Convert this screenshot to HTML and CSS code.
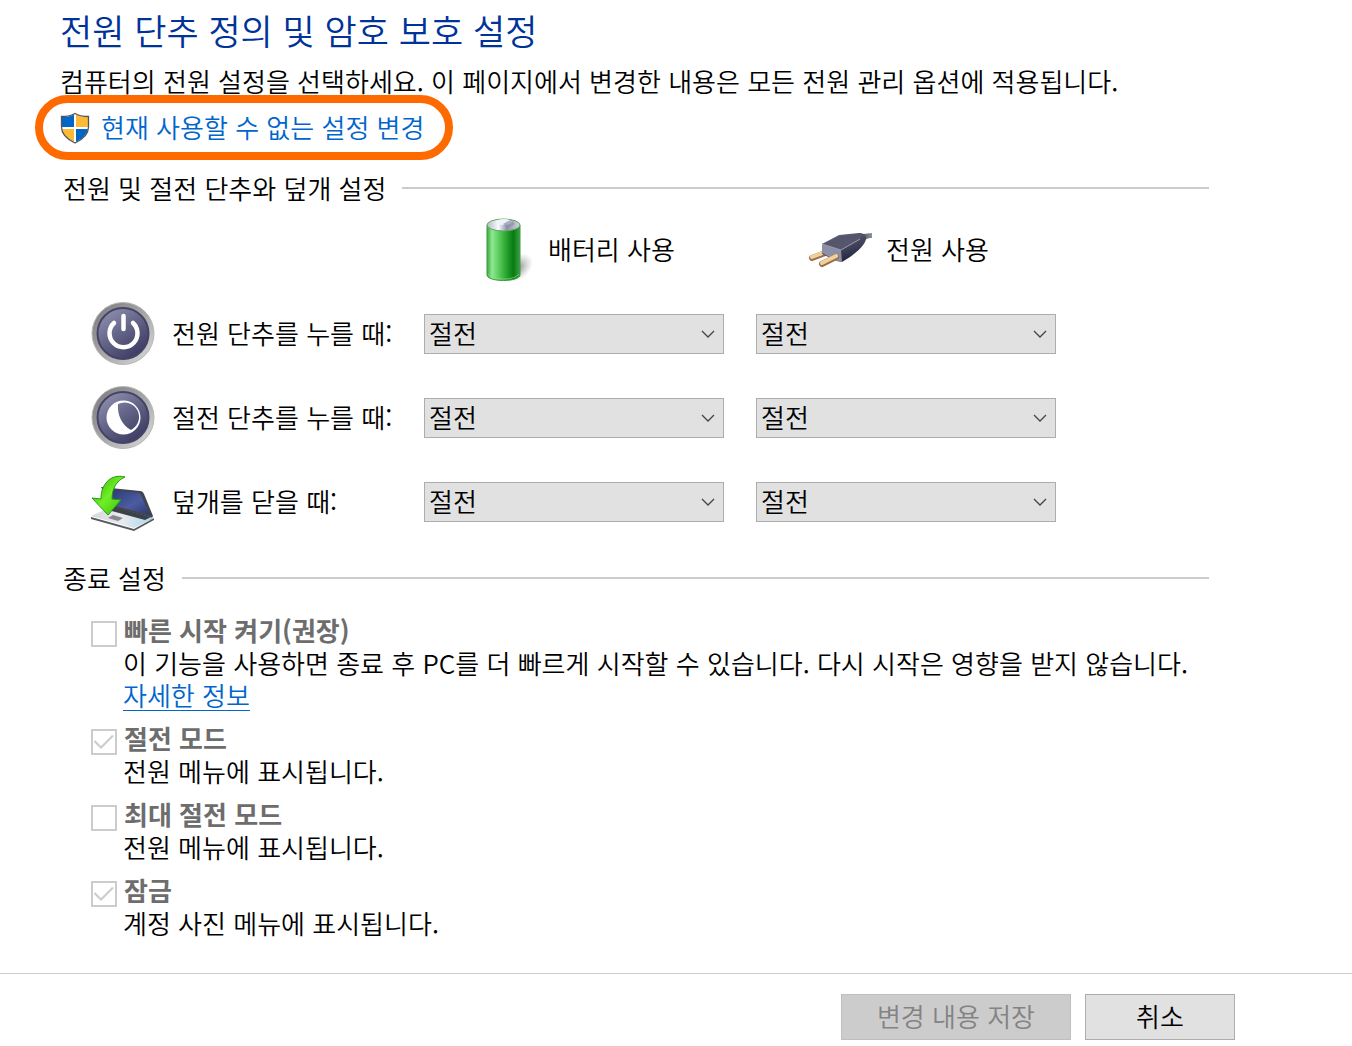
FILE: index.html
```html
<!DOCTYPE html>
<html lang="ko">
<head>
<meta charset="utf-8">
<meta name="viewport" content="width=device-width, initial-scale=1">
<title>전원 단추 정의 및 암호 보호 설정</title>
<link rel="stylesheet" href="styles.css">
</head>
<body>
<form class="page">
  <main class="content">
    <h1 class="title">전원 단추 정의 및 암호 보호 설정</h1>
    <p class="intro">컴퓨터의 전원 설정을 선택하세요. 이 페이지에서 변경한 내용은 모든 전원 관리 옵션에 적용됩니다.</p>
    <a class="admin-link" href="#">
      <svg class="shield" viewBox="0 0 30 32" aria-hidden="true">
        <defs><clipPath id="shieldClip"><path d="M15 2C11 4.500 6 5 2 5v10c0 7 6 12 13 15.500C22 27 28 22 28 15V5C24 5 19 4.500 15 2z"/></clipPath></defs>
        <g clip-path="url(#shieldClip)">
          <path fill="#0067c8" d="M0 0h14v16H0zM16 17h14v15H16z"/>
          <path fill="#fdbb35" d="M16 0h14v16H16zM0 17h14v15H0z"/>
          <path fill="#fff" d="M14 0h2v32h-2zM0 15h30v2H0z"/>
        </g>
        <path fill="none" stroke="#50565c" stroke-width="1.300" d="M15 1.500C11 4 6 4.500 1.500 4.500V15c0 7 6 12.500 13.500 16C22.500 27.500 28.500 22 28.500 15V4.500C24 4.500 19 4 15 1.500z"/>
      </svg>
      <span>현재 사용할 수 없는 설정 변경</span>
    </a>

    <section class="buttons-section">
      <h2 class="section-title">전원 및 절전 단추와 덮개 설정</h2>
      <div class="grid">
        <div class="source source-battery">
          <svg class="icon" viewBox="0 0 64 64" aria-hidden="true">
            <defs>
              <linearGradient id="cell"><stop offset="0" stop-color="#35a83b"/><stop offset=".15" stop-color="#8fe88f"/><stop offset=".38" stop-color="#55c957"/><stop offset=".62" stop-color="#239d2b"/><stop offset=".8" stop-color="#087a12"/><stop offset="1" stop-color="#3da044"/></linearGradient>
              <linearGradient id="cap"><stop offset="0" stop-color="#b9bbc4"/><stop offset=".35" stop-color="#f8f8ff"/><stop offset=".6" stop-color="#8f91a8"/><stop offset="1" stop-color="#d5d5df"/></linearGradient>
              <radialGradient id="shade"><stop offset="0" stop-color="#666" stop-opacity=".8"/><stop offset="1" stop-color="#999" stop-opacity="0"/></radialGradient>
            </defs>
            <ellipse cx="47" cy="50" rx="18" ry="12" fill="url(#shade)" transform="rotate(-38 47 50)"/>
            <path fill="url(#cell)" stroke="#3c9b40" d="M17 7v50c0 3 7 5.500 16.500 5.500S50 60 50 57V7z"/>
            <path fill="none" stroke="#96df96" stroke-opacity=".6" d="M18 56c2 3 8 5 15.500 5S47 59 49 56"/>
            <ellipse cx="33.500" cy="7" rx="16.500" ry="6" fill="url(#cap)" stroke="#5fa762"/>
            <ellipse cx="34" cy="4" rx="8" ry="3" fill="#f2f2fa"/>
            <path fill="#8e8fac" d="m33 6 7-4 5 4-7 4z" opacity=".7"/>
          </svg>
          <span>배터리 사용</span>
        </div>
        <div class="source source-plug">
          <svg class="icon" viewBox="0 0 64 64" aria-hidden="true">
            <defs>
              <linearGradient id="plug" x2=".5" y2="1"><stop offset="0" stop-color="#73748a"/><stop offset=".5" stop-color="#4a4b63"/><stop offset="1" stop-color="#23243f"/></linearGradient>
              <linearGradient id="cord"><stop offset="0" stop-color="#454b4c"/><stop offset="1" stop-color="#8b9292"/></linearGradient>
            </defs>
            <path fill="url(#cord)" d="M51 15c5 2 8 0 13 0v5c-4 0-7 1-10 5z"/>
            <path fill="none" stroke="#95714a" stroke-width="6" stroke-linecap="round" d="m4 40 16-6"/>
            <path fill="none" stroke="#f3cf9d" stroke-width="4" stroke-linecap="round" d="m4 39 16-6"/>
            <path fill="url(#plug)" d="M14 26 31 17l20-2c5 0 8 3 7 6-1 6-9 13-16 18l-8 5-5-1-15-7z"/>
            <path fill="#55566b" d="m15 26 17-8 19-2c4 1 3 3 0 5L33 32z"/>
            <path fill="#8d8fa5" d="m14 26 19 6 1 12-5-1-15-8z"/>
            <path fill="none" stroke="#9b9cb0" stroke-width="1" d="m14 26 19 6 19-11"/>
            <path fill="none" stroke="#95714a" stroke-width="6" stroke-linecap="round" d="m14 46 14-7"/>
            <path fill="none" stroke="#f3cf9d" stroke-width="4" stroke-linecap="round" d="m14 45 14-7"/>
          </svg>
          <span>전원 사용</span>
        </div>

        <div class="action">
          <svg class="icon" viewBox="0 0 64 64" aria-hidden="true">
            <defs>
              <linearGradient id="ring" x2="1" y2="1"><stop offset="0" stop-color="#77777b"/><stop offset=".55" stop-color="#aaaaac"/><stop offset="1" stop-color="#dedede"/></linearGradient>
              <linearGradient id="face" x2=".7" y2="1"><stop offset="0" stop-color="#9a9ab8"/><stop offset=".5" stop-color="#66678a"/><stop offset="1" stop-color="#3d3b62"/></linearGradient>
            </defs>
            <circle cx="32" cy="31.500" r="31" fill="url(#ring)" stroke="#b7b7b7"/>
            <circle cx="32" cy="31.500" r="25.500" fill="url(#face)" stroke="#454366" stroke-width="2"/>
            <path fill="none" stroke="#fff" stroke-width="4.500" stroke-linecap="round" d="M23 21a14 14 0 1 0 19 0M32.500 14v13"/>
          </svg>
          <span>전원 단추를 누를 때:</span>
        </div>
        <div class="picker">
          <select class="select" aria-label="전원 단추를 누를 때: 배터리 사용"><option>절전</option></select>
          <svg class="chevron" viewBox="0 0 14 8" aria-hidden="true"><path d="m1 1 6 6 6-6"/></svg>
        </div>
        <div class="picker">
          <select class="select" aria-label="전원 단추를 누를 때: 전원 사용"><option>절전</option></select>
          <svg class="chevron" viewBox="0 0 14 8" aria-hidden="true"><path d="m1 1 6 6 6-6"/></svg>
        </div>

        <div class="action">
          <svg class="icon" viewBox="0 0 64 64" aria-hidden="true">
            <circle cx="32" cy="31.500" r="31" fill="url(#ring)" stroke="#b7b7b7"/>
            <circle cx="32" cy="31.500" r="25.500" fill="url(#face)" stroke="#454366" stroke-width="2"/>
            <path fill="#fff" fill-rule="evenodd" d="M32.500 14.500a17 17 0 1 0 0 34 17 17 0 0 0 0-34zM27 18a14.500 14.500 0 0 1 13 26C31 39 26 29 27 18z"/>
          </svg>
          <span>절전 단추를 누를 때:</span>
        </div>
        <div class="picker">
          <select class="select" aria-label="절전 단추를 누를 때: 배터리 사용"><option>절전</option></select>
          <svg class="chevron" viewBox="0 0 14 8" aria-hidden="true"><path d="m1 1 6 6 6-6"/></svg>
        </div>
        <div class="picker">
          <select class="select" aria-label="절전 단추를 누를 때: 전원 사용"><option>절전</option></select>
          <svg class="chevron" viewBox="0 0 14 8" aria-hidden="true"><path d="m1 1 6 6 6-6"/></svg>
        </div>

        <div class="action">
          <svg class="icon" viewBox="0 0 64 64" aria-hidden="true">
            <defs>
              <linearGradient id="screen" x2="1" y2="1"><stop offset="0" stop-color="#26356f"/><stop offset=".6" stop-color="#4c5ca0"/><stop offset="1" stop-color="#2b376e"/></linearGradient>
              <linearGradient id="deck"><stop offset="0" stop-color="#d8d8dc"/><stop offset=".5" stop-color="#e8eaed"/><stop offset="1" stop-color="#a4d5eb"/></linearGradient>
              <linearGradient id="arrow" x2="1" y2="1"><stop offset="0" stop-color="#31ac0a"/><stop offset=".5" stop-color="#70ef25"/><stop offset="1" stop-color="#38b80e"/></linearGradient>
            </defs>
            <path fill="#41464e" d="m10 17 39 4c2 0 3 1 4 3l9 22-2 4-38-10z"/>
            <path fill="url(#screen)" d="m14 19 35 4 10 22-35-9z"/>
            <path fill="#555a60" d="m0 47 43 12 20-11v2L43 61 0 49z"/>
            <path fill="url(#deck)" d="m0 46 20-9 43 11-20 10z"/>
            <path fill="#3c4047" d="m22 37 38 10-6 3-37-10z"/>
            <path fill="#85898f" d="m22 45 10 3-5 3-10-3z"/>
            <path fill="url(#arrow)" stroke="#239c10" d="M34 7C27 5 19 7 15 13c-4 5-5 10-5 16l-9-1 16 17 13-15-9-1c0-10 4-18 13-22z"/>
          </svg>
          <span>덮개를 닫을 때:</span>
        </div>
        <div class="picker">
          <select class="select" aria-label="덮개를 닫을 때: 배터리 사용"><option>절전</option></select>
          <svg class="chevron" viewBox="0 0 14 8" aria-hidden="true"><path d="m1 1 6 6 6-6"/></svg>
        </div>
        <div class="picker">
          <select class="select" aria-label="덮개를 닫을 때: 전원 사용"><option>절전</option></select>
          <svg class="chevron" viewBox="0 0 14 8" aria-hidden="true"><path d="m1 1 6 6 6-6"/></svg>
        </div>
      </div>
    </section>

    <section class="shutdown-section">
      <h2 class="section-title">종료 설정</h2>
      <div class="options">
        <div class="option">
          <input class="check" type="checkbox" id="fast" disabled>
          <div class="option-text">
            <label class="option-name" for="fast">빠른 시작 켜기(권장)</label>
            <p class="option-note">이 기능을 사용하면 종료 후 PC를 더 빠르게 시작할 수 있습니다. 다시 시작은 영향을 받지 않습니다.</p>
            <a class="more" href="#">자세한 정보</a>
          </div>
        </div>
        <div class="option">
          <input class="check" type="checkbox" id="sleep" checked disabled>
          <div class="option-text">
            <label class="option-name" for="sleep">절전 모드</label>
            <p class="option-note">전원 메뉴에 표시됩니다.</p>
          </div>
        </div>
        <div class="option">
          <input class="check" type="checkbox" id="hibernate" disabled>
          <div class="option-text">
            <label class="option-name" for="hibernate">최대 절전 모드</label>
            <p class="option-note">전원 메뉴에 표시됩니다.</p>
          </div>
        </div>
        <div class="option">
          <input class="check" type="checkbox" id="lock" checked disabled>
          <div class="option-text">
            <label class="option-name" for="lock">잠금</label>
            <p class="option-note">계정 사진 메뉴에 표시됩니다.</p>
          </div>
        </div>
      </div>
    </section>
  </main>
  <footer class="footer">
    <button class="button button-save" type="submit" disabled>변경 내용 저장</button>
    <button class="button button-cancel" type="button">취소</button>
  </footer>
</form>
</body>
</html>
```
FILE: styles.css
```css
* { box-sizing: border-box; }

body {
  margin: 0;
  background: #fff;
  color: #000;
  font: 350 26px/32px "Noto Sans CJK KR", sans-serif;
}

h1, h2, p { margin: 0; font-weight: inherit; }

.content { padding: 8px 143px 34px 60px; }

.title {
  color: #003399;
  font-size: 35px;
  line-height: 44px;
}

.intro {
  margin-top: 12px;
  margin-right: -80px;
  line-height: 34px;
}

/* Highlighted link: the ring hangs out to the left of the text column */
.admin-link {
  display: flex;
  align-items: center;
  gap: 11px;
  width: fit-content;
  height: 65px;
  margin: -3px 0 0 -25px;
  padding: 0 21px 0 17px;
  border: 8px solid #ff6a00;
  border-radius: 33px;
  color: #0066cc;
  text-decoration: none;
}

.shield { width: 30px; height: 32px; }

.admin-link span, .source span, .action span { padding-bottom: 2px; }

.section-title {
  display: flex;
  align-items: center;
  gap: 16px;
  padding-left: 3px;
  font-size: 26px;
  line-height: 34px;
}

.section-title::after {
  content: "";
  flex: 1;
  height: 2px;
  background: #ccc;
}

.buttons-section { margin-top: 11px; }
.shutdown-section { margin-top: 27px; }

.grid {
  display: grid;
  grid-template-columns: 301px minmax(0, 300px) minmax(0, 300px);
  align-items: center;
  gap: 20px 32px;
  margin-top: 13px;
  padding-left: 31px;
}

.icon { flex: none; width: 64px; height: 64px; }

.source, .action {
  display: flex;
  align-items: center;
  gap: 17px;
  white-space: nowrap;
}

.source { gap: 14px; }
.source-battery { grid-column: 2; padding-left: 46px; }
.source-plug { padding-left: 52px; }

.picker { position: relative; }

.select {
  display: block;
  appearance: none;
  width: 100%;
  height: 40px;
  margin: 0;
  padding: 0 32px 2px 4px;
  border: 1px solid #adadad;
  border-radius: 0;
  background: #e1e1e1;
  color: #000;
  font: inherit;
}

.chevron {
  position: absolute;
  top: 16px;
  right: 9px;
  width: 14px;
  height: 8px;
  fill: none;
  stroke: #444;
  stroke-width: 1.3;
  pointer-events: none;
}

.options {
  display: grid;
  gap: 12px;
  margin-top: 20px;
  padding-left: 31px;
}

.option { display: flex; gap: 6px; }

.check {
  flex: none;
  appearance: none;
  display: grid;
  place-items: center;
  width: 26px;
  height: 26px;
  margin: 6px 0 0;
  border: 2px solid #ccc;
  background: #fff;
}

.check:checked::before {
  content: "";
  width: 20px;
  height: 14px;
  background: #ccc;
  clip-path: polygon(0 7px, 1px 5px, 7px 11px, 18px 0, 20px 1px, 7px 14px);
}

.option-text { margin-right: -60px; }

.option-name {
  display: block;
  padding: 0 0 2px 1px;
  color: #6d6d6d;
  font-weight: 700;
  line-height: 30px;
}

.more {
  display: block;
  width: fit-content;
  height: 32px;
  border-bottom: 1px solid #0066cc;
  color: #0066cc;
  text-decoration: none;
}

.footer {
  display: flex;
  justify-content: flex-end;
  gap: 14px;
  padding: 20px 117px 6px 60px;
  border-top: 1px solid #ccc;
}

.button {
  height: 46px;
  padding: 0 6px 2px;
  border: 1px solid #adadad;
  border-radius: 0;
  background: #e1e1e1;
  color: #000;
  font: inherit;
}

.button-save { width: 230px; }
.button-cancel { width: 150px; }

.button:disabled {
  border-color: #bfbfbf;
  background: #ccc;
  color: #838383;
}
```
